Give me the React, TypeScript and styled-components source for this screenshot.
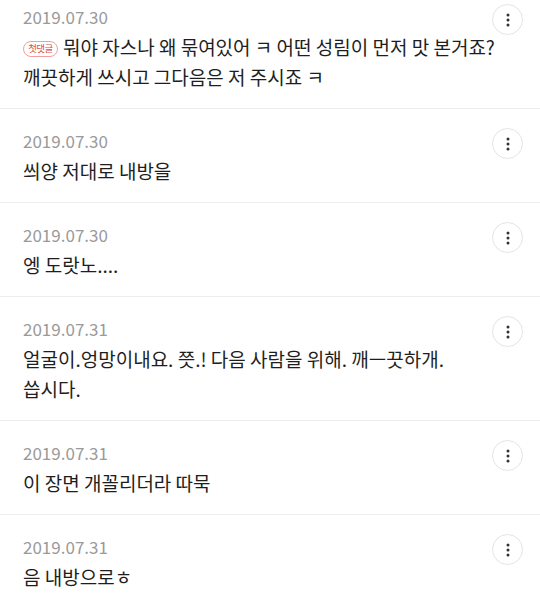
import React from "react";
import styled, { createGlobalStyle } from "styled-components";

const Global = createGlobalStyle`
  html, body { margin: 0; padding: 0; background: #fff; }
  body { font-family: "Noto Sans CJK KR", "Noto Sans", sans-serif; overflow: hidden; }
`;

const List = styled.ul`
  list-style: none;
  margin: -15px 0 0;
  padding: 0;
`;

const Item = styled.li`
  position: relative;
  padding: 18px 60px 16px 23px;
  border-bottom: 1px solid #ededed;
`;

const DateLine = styled.div`
  font-size: 17px;
  line-height: 28px;
  color: #9a9a9a;
  font-family: "Noto Sans CJK KR", "Noto Sans", sans-serif;
  font-weight: 400;
`;

const Body = styled.p`
  margin: 1px -18px 0 0;
  font-size: 19px;
  line-height: 30px;
  color: #1e1e1e;
  word-break: keep-all;
`;

const Badge = styled.span`
  display: inline-flex;
  align-items: center;
  justify-content: center;
  box-sizing: border-box;
  width: 35px;
  height: 16px;
  margin-right: 5px;
  border: 1px solid #f0a0a0;
  border-radius: 8px;
  font-size: 9.5px;
  line-height: 1;
  color: #e44c4c;
  vertical-align: 3px;
  letter-spacing: -0.5px;
`;

const MoreButton = styled.button`
  position: absolute;
  top: 19px;
  right: 17px;
  width: 31px;
  height: 31px;
  box-sizing: border-box;
  border: 1px solid #e4e4e4;
  border-radius: 50%;
  background: #fff;
  padding: 0;
  display: flex;
  align-items: center;
  justify-content: center;
`;

const Dots = () => (
  <svg width="4" height="14" viewBox="0 0 4 14">
    <circle cx="2" cy="2" r="1.5" fill="#333" />
    <circle cx="2" cy="7" r="1.5" fill="#333" />
    <circle cx="2" cy="12" r="1.5" fill="#333" />
  </svg>
);

type Comment = { date: string; text: string; first?: boolean };

const comments: Comment[] = [
  {
    date: "2019.07.30",
    first: true,
    text: "뭐야 자스나 왜 묶여있어 ㅋ 어떤 성림이 먼저 맛 본거죠? 깨끗하게 쓰시고 그다음은 저 주시죠 ㅋ",
  },
  { date: "2019.07.30", text: "씌양 저대로 내방을" },
  { date: "2019.07.30", text: "엥 도랏노...." },
  {
    date: "2019.07.31",
    text: "얼굴이.엉망이내요. 쯧.! 다음 사람을 위해. 깨ㅡ끗하개. 씁시다.",
  },
  { date: "2019.07.31", text: "이 장면 개꼴리더라 따묵" },
  { date: "2019.07.31", text: "음 내방으로ㅎ" },
];

export default function App() {
  return (
    <>
      <Global />
      <List>
        {comments.map((c, i) => (
          <Item key={i}>
            <DateLine>{c.date}</DateLine>
            <Body>
              {c.first && <Badge>첫댓글</Badge>}
              {c.text}
            </Body>
            <MoreButton aria-label="more">
              <Dots />
            </MoreButton>
          </Item>
        ))}
      </List>
    </>
  );
}
